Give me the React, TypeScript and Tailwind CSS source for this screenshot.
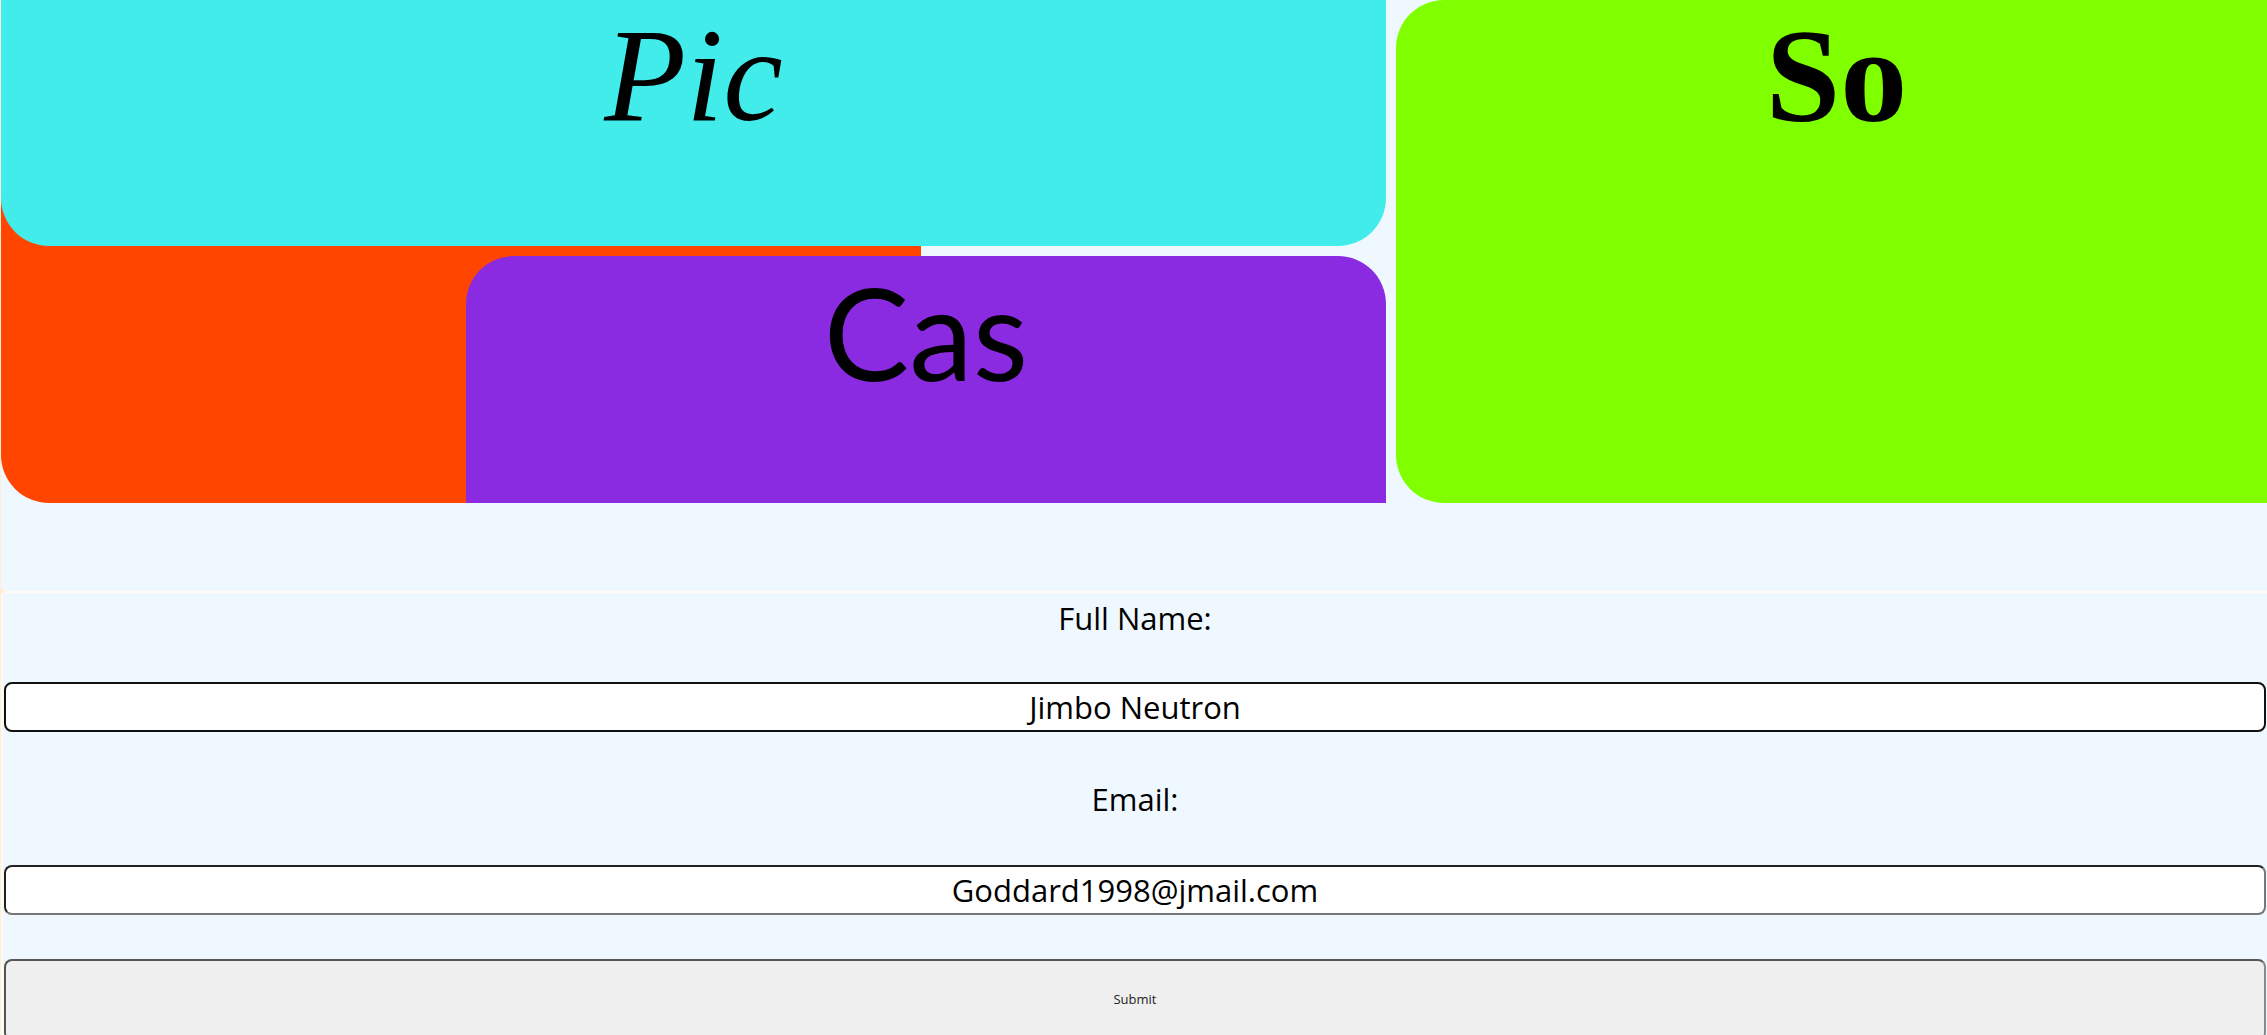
import { useState } from "react";

export default function App() {
  const [name, setName] = useState("Jimbo Neutron");
  const [email, setEmail] = useState("Goddard1998@jmail.com");

  return (
    <div className="min-h-screen overflow-hidden bg-[#ffefd5]">
      <section className="ml-[1px] rounded-bl-[6px] bg-[#f0f8ff] pb-[88px]">
        <div className="grid grid-cols-[1385px_1fr] gap-x-[10px]">
          <div className="grid grid-cols-[465px_455px_465px] grid-rows-[246px_10px_247px]">
            <div className="col-start-1 col-end-3 row-start-1 row-end-4 rounded-bl-[48px] bg-[#ff4500]" />
            <div className="col-start-1 col-end-4 row-start-1 row-end-2 rounded-b-[48px] bg-[#41ecea] text-center">
              <h1 className="font-['Times_New_Roman','Liberation_Serif',serif] text-[134px] font-normal italic leading-[150px] text-black">
                Pic
              </h1>
            </div>
            <div className="col-start-2 col-end-4 row-start-3 row-end-4 rounded-t-[48px] bg-[#8a2be2] text-center">
              <h1 className="font-['Gill_Sans','Gill_Sans_MT',Lato,sans-serif] text-[128px] font-normal leading-[151px] text-black">
                Cas
              </h1>
            </div>
          </div>

          <div className="h-[503px] rounded-l-[48px] bg-[#7fff00] pl-[10px] text-center">
            <h1 className="font-['Times_New_Roman','Liberation_Serif',serif] text-[134px] font-bold leading-[152px] text-black">
              So
            </h1>
          </div>
        </div>
      </section>

      <form
        className="ml-[1px] rounded-tl-[6px] border-l-2 border-t-2 border-[#fffaf4] bg-[#f0f8ff] pb-4 pt-[3px] text-center font-['Comic_Sans_MS','Open_Sans',sans-serif] text-black"
        onSubmit={(e) => e.preventDefault()}
      >
        <label htmlFor="fullName" className="block h-[44px] text-[31px] leading-[44px]">
          Full Name:
        </label>
        <input
          id="fullName"
          type="text"
          value={name}
          onChange={(e) => setName(e.target.value)}
          spellCheck={false}
          className="ml-[1px] mt-[42px] block h-[50px] w-[2262px] rounded-[8px] border-2 border-[#111] bg-white text-center text-[31px] outline-none"
        />

        <label htmlFor="email" className="mt-[45px] block h-[44px] text-[31px] leading-[44px]">
          Email:
        </label>
        <input
          id="email"
          type="email"
          value={email}
          onChange={(e) => setEmail(e.target.value)}
          className="ml-[1px] mt-[44px] block h-[50px] w-[2262px] rounded-[8px] border-2 border-[#222] border-b-[#777] border-r-[#777] bg-white text-center text-[31px] outline-none"
        />

        <button
          type="submit"
          className="ml-[1px] mt-[44px] block h-[82px] w-[2262px] rounded-[8px] border-2 border-[#555] border-b-[#888] border-r-[#888] bg-[#efefef] text-center text-[13px] text-[#222]"
        >
          Submit
        </button>
      </form>
    </div>
  );
}
